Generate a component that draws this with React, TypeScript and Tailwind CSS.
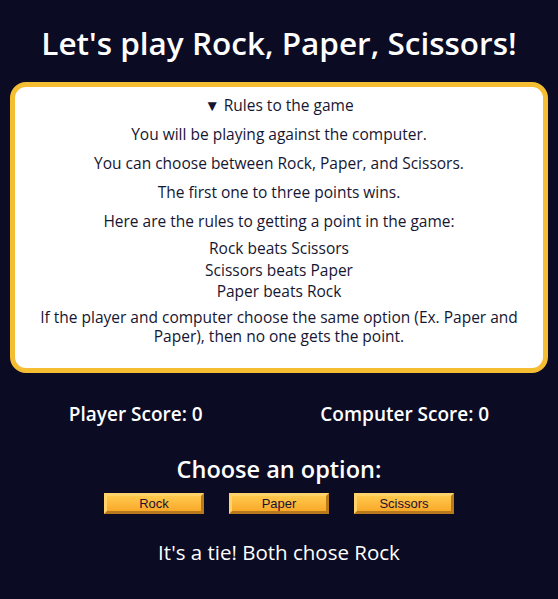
import { useState } from 'react';

const choices = ['Rock', 'Paper', 'Scissors'];

export default function App() {
  const [open, setOpen] = useState(true);

  return (
    <main className="min-h-[599px] bg-[#0b0b24] text-white [font-family:'Open_Sans',sans-serif]">
      <h1 className="pt-[24px] text-center text-[31.5px] leading-[38px] font-semibold">Let's play Rock, Paper, Scissors!</h1>

      <details
        open={open}
        onToggle={(e) => setOpen((e.target as HTMLDetailsElement).open)}
        className="mx-[10px] mt-[20px] rounded-[16px] border-[5px] border-[#f4bd32] bg-white px-4 pt-[9px] pb-[22px] text-center text-[15.5px] leading-[19px] text-[#161632]"
      >
        <summary className="cursor-pointer list-none">{open ? '▼' : '▶'} Rules to the game</summary>
        <p className="mt-[10px]">You will be playing against the computer.</p>
        <p className="mt-[10px]">You can choose between Rock, Paper, and Scissors.</p>
        <p className="mt-[10px]">The first one to three points wins.</p>
        <p className="mt-[10px]">Here are the rules to getting a point in the game:</p>
        <p className="mt-[7px] leading-[21.5px]">
          Rock beats Scissors
          <br />
          Scissors beats Paper
          <br />
          Paper beats Rock
        </p>
        <p className="mt-[5.5px]">
          If the player and computer choose the same option (Ex. Paper and Paper), then no one gets the point.
        </p>
      </details>

      <div className="mx-[10px] mt-[29px] flex justify-around text-[19px] leading-[24px] font-semibold">
        <p>Player Score: 0</p>
        <p>Computer Score: 0</p>
      </div>

      <h2 className="mt-[29px] text-center text-[23.5px] leading-[28px] font-semibold">Choose an option:</h2>
      <div className="mt-[10px] flex justify-center gap-[25px]">
        {choices.map((choice) => (
          <button
            key={choice}
            type="button"
            className="h-[21px] w-[100px] border-[3px] border-t-[#ffd36a] border-l-[#ffd36a] border-r-[#b87a1c] border-b-[#b87a1c] bg-gradient-to-b from-[#ffc94c] to-[#f9a928] text-[13px] leading-[15px] text-[#1a1030] [font-family:Arial,'Liberation_Sans',sans-serif]"
          >
            {choice}
          </button>
        ))}
      </div>

      <p className="mt-[26px] text-center text-[20.5px] leading-[24px]">It's a tie! Both chose Rock</p>
    </main>
  );
}
